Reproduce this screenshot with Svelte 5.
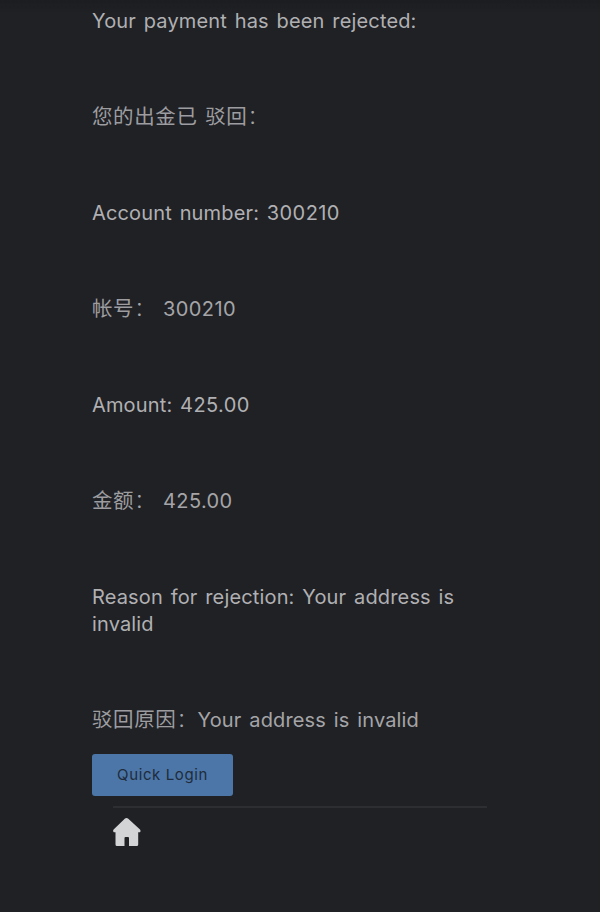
<script>
  const lines = [
    [['latin', 'Your payment has been rejected:']],
    [['han', '您的出金已 驳回'], ['colon', '：']],
    [['latin', 'Account number: '], ['number', '300210']],
    [['han', '帐号'], ['colon', '：'], ['han', ' '], ['number', '300210']],
    [['latin', 'Amount: '], ['number', '425.00']],
    [['han', '金额'], ['colon', '：'], ['han', ' '], ['number', '425.00']],
    [['latin', 'Reason for rejection: Your address is invalid']],
    [['han', '驳回原因'], ['colon', '：'], ['latin', 'Your address is invalid']],
  ];
</script>

<main>
  <section>
    {#each lines as line, i}
      <p class:dim={i % 2 === 1} lang={i % 2 ? 'zh-CN' : 'en'}>{#each line as [kind, text]}<span class={kind}>{text}</span>{/each}</p>
    {/each}
  </section>
  <button>Quick Login</button>
  <footer>
    <svg viewBox="0 0 28 28" width="28" height="28" aria-label="Home">
      <path d="M12 .5 Q13.5 -.5 15 .5 L27 11.5 Q28.3 13.2 27 14.3 H25.2 V26.5 Q25.2 28 23.7 28 H16 V20 Q16 19 15 19 H12.5 Q11.5 19 11.5 20 V28 H4 Q2.5 28 2.5 26.5 V14.3 H.8 Q-.7 13.2 .6 11.5 Z" fill="#d3d4d6" />
    </svg>
  </footer>
</main>

<style>
  :global(body) { background: #202125; }
  main {
    box-sizing: border-box;
    height: 912px;
    overflow: hidden;
    padding: 8px 92px 0;
    background: linear-gradient(#1c1d20, #202125 14px);
    color: #b0b0b3;
    font-family: Inter, "Noto Sans CJK SC", sans-serif;
  }
  p {
    margin: 0 0 69px;
    width: 390px;
    font-size: 20px;
    line-height: 27px;
  }
  p:last-child { margin-bottom: 20px; }
  .dim { color: #a5a5a8; }
  .latin { letter-spacing: 0.15px; word-spacing: 2px; }
  .number { letter-spacing: 0.4px; }
  .han, .colon {
    font-family: "Noto Sans CJK SC", sans-serif;
    font-size: 20.5px;
    font-weight: 400;
    line-height: 1;
    letter-spacing: 0.6px;
    word-spacing: 2.5px;
  }
  .han { color: #9d9da0; }
  .colon { font-weight: 300; }
  button {
    display: block;
    width: 141px;
    height: 42px;
    padding: 0;
    border: 0;
    border-radius: 3px;
    background: #4b76a7;
    color: #202c3b;
    font: 400 15px/42px Inter, sans-serif;
    letter-spacing: 0.6px;
  }
  footer {
    box-sizing: border-box;
    margin: 10px 21px 0;
    width: 374px;
    border-top: 2px solid #2d2e32;
    padding-top: 10px;
  }
  svg { display: block; overflow: visible; }
</style>
